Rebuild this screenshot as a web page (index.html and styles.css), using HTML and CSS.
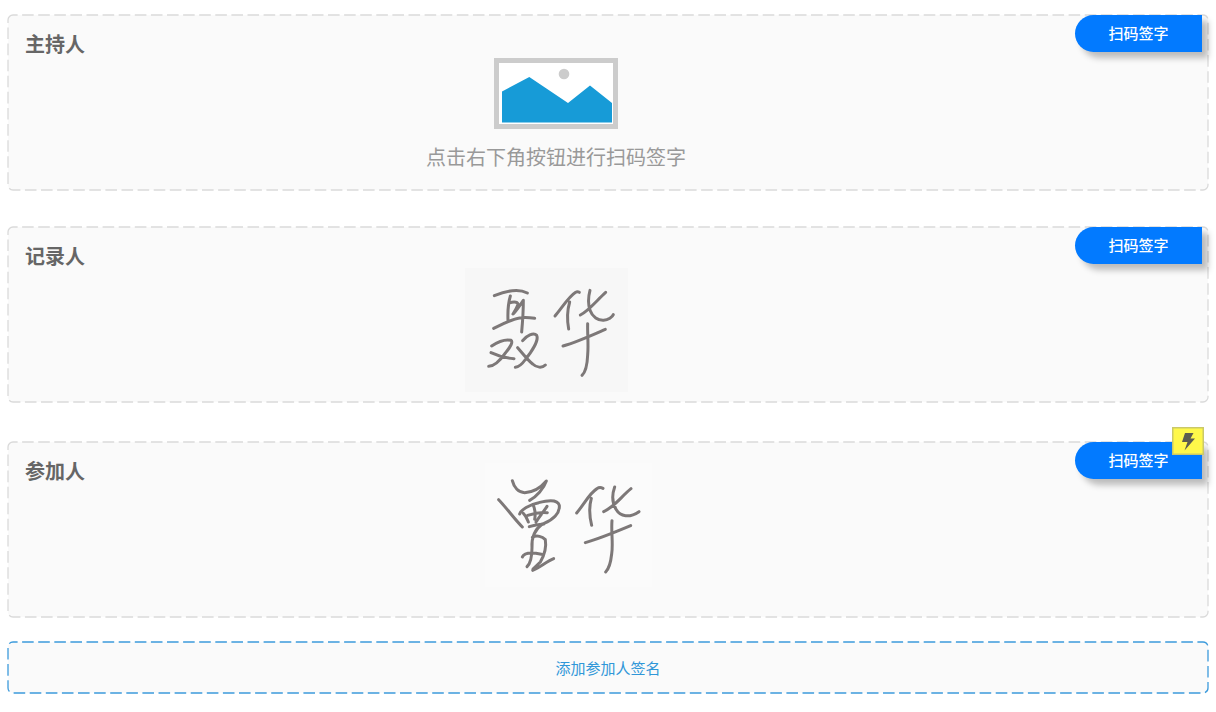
FILE: index.html
```html
<!DOCTYPE html>
<html lang="zh-CN">
<head>
<meta charset="utf-8">
<title>签名</title>
<link rel="stylesheet" href="styles.css">
</head>
<body>
<main class="page">
  <section class="card">
    <svg class="frame" aria-hidden="true"><rect class="frame-line" width="100%" height="100%" rx="5"/></svg>
    <h2 class="title">主持人</h2>
    <div class="empty">
      <svg class="picture" viewBox="0 0 124 71" aria-hidden="true">
        <rect x="2.5" y="2.5" width="119" height="66" fill="#fff" stroke="#ccc" stroke-width="5"/>
        <circle cx="70" cy="16" r="5.3" fill="#ccc"/>
        <path d="M8 33.5L35.300 19L74 45L96 27.500L118 45V64.500H8Z" fill="#179bd7"/>
      </svg>
      <p class="hint">点击右下角按钮进行扫码签字</p>
    </div>
    <button class="scan" type="button">扫码签字</button>
  </section>

  <section class="card">
    <svg class="frame" aria-hidden="true"><rect class="frame-line" width="100%" height="100%" rx="5"/></svg>
    <h2 class="title">记录人</h2>
    <div class="signed signed-recorder">
      <svg class="signature signature-shaded" viewBox="460 260 163 124" role="img" aria-label="签名">
        <g transform="translate(-5 -8) translate(460 260) scale(.33333)">
          <path d="M103 107C130 96 174 84 202 99M151 108C144 132 143 159 144 181M147 129C163 124 177 125 173 136C169 147 163 155 159 162M161 160C170 151 179 137 190 121C190 147 188 184 185 216M101 205C128 192 154 178 179 174C196 171 211 173 224 175"/>
          <path d="M95 258C113 246 135 237 153 241C160 246 151 261 137 278C123 298 106 319 86 319M93 278C112 287 137 295 162 296M188 242C199 227 221 216 230 226C237 240 216 274 195 300C185 314 175 321 166 322M173 263C187 279 203 300 218 312C230 323 246 325 256 315"/>
          <path d="M285 168C306 143 327 109 347 97Q352 93 358 97M329 126C322 150 321 180 326 207M390 91C384 113 384 132 390 151C397 171 415 182 431 181C445 180 457 171 460 164M437 97C412 119 388 151 361 165M309 258C351 246 397 225 436 208M383 191C382 223 386 252 383 285C382 310 377 336 366 346"/>
        </g>
      </svg>
    </div>
    <button class="scan" type="button">扫码签字</button>
  </section>

  <section class="card card-last">
    <svg class="frame" aria-hidden="true"><rect class="frame-line" width="100%" height="100%" rx="5"/></svg>
    <h2 class="title">参加人</h2>
    <div class="signed signed-attendee">
      <svg class="signature" viewBox="5 8 167 124" role="img" aria-label="签名">
        <g transform="scale(.33333)">
          <path d="M97 77C102 98 116 113 134 113C159 112 183 97 199 78C191 101 169 126 149 136M56 134C81 160 102 191 127 216"/>
          <path d="M119 177C123 164 148 149 176 143C202 136 233 133 238 151C240 175 219 195 192 205M130 175C139 183 142 193 145 201M143 181C161 175 176 171 202 173M159 149C165 162 167 177 164 193M201 154C191 170 177 186 168 201M148 215C163 210 180 208 192 207"/>
          <path d="M187 207C166 222 154 244 156 278C156 303 151 325 141 335M157 247C171 239 187 245 196 254C199 272 197 293 181 321L159 342M127 306C133 293 156 292 184 298M158 346C180 338 197 321 221 311"/>
          <path d="M290 174C312 148 329 114 351 101Q359 95 369 100M334 130C327 155 329 187 335 211M404 96C394 124 398 146 408 163C421 186 449 189 477 170M453 101C424 124 407 153 371 170M316 263C361 250 409 230 452 212M396 197C393 229 400 268 395 297C392 325 386 342 377 351"/>
        </g>
      </svg>
    </div>
    <button class="scan" type="button">扫码签字</button>
    <svg class="flash" viewBox="0 0 32 28" aria-hidden="true">
      <rect x=".75" y=".75" width="30.500" height="26.500" fill="#fff84a" stroke="#cbc968" stroke-width="1.500"/>
      <path d="M13 6H21.500L18.500 11.500H23L12.500 23.500L15.500 15H10Z" fill="#5c5c50"/>
    </svg>
  </section>

  <button class="add" type="button">
    <svg class="frame" aria-hidden="true"><rect class="frame-line frame-line-blue" width="100%" height="100%" rx="5"/></svg>
    添加参加人签名
  </button>
</main>
</body>
</html>
```
FILE: styles.css
```css
* {
  box-sizing: border-box;
}

body {
  margin: 0;
  background: #fff;
  font-family: "Noto Sans CJK SC", sans-serif;
}

.page {
  display: flex;
  flex-direction: column;
  gap: 37px;
  padding: 15px 8px;
}

.card {
  position: relative;
  min-height: 175px;
  padding: 15px 17px 0;
  border-radius: 5px;
  background: #fafafa;
}

.card-last {
  margin-top: 3px;
}

.frame {
  position: absolute;
  inset: 0;
  width: 100%;
  height: 100%;
  overflow: visible;
  pointer-events: none;
}

.frame-line {
  fill: none;
  stroke: #dadada;
  stroke-width: 1.3;
  stroke-dasharray: 11.6 4.5;
  stroke-dashoffset: 7;
}

.frame-line-blue {
  stroke: #3d9bdc;
}

.title {
  margin: 0;
  height: 28px;
  font-size: 20px;
  line-height: 28px;
  font-weight: 700;
  color: #666;
}

.empty {
  display: flex;
  flex-direction: column;
  align-items: center;
  gap: 14px;
  padding-right: 104px;
}

.picture {
  width: 124px;
  height: 71px;
}

.hint {
  margin: 0;
  font-size: 20px;
  line-height: 28px;
  color: #999;
}

.signed {
  display: flex;
  justify-content: center;
  margin-top: -2px;
}

.signed-recorder {
  padding-right: 123px;
}

.signed-attendee {
  margin-top: -22px;
  padding-right: 79px;
}

.signature {
  height: 124px;
  fill: none;
  stroke: #7d7878;
  stroke-width: 9;
  stroke-linecap: round;
  stroke-linejoin: round;
  background: #fbfbfb;
}

.signature-shaded {
  background: #f7f7f7;
}

.scan {
  position: absolute;
  top: 0;
  right: 6px;
  width: 127px;
  height: 37px;
  padding: 0 0 2px;
  border: 0;
  border-radius: 19px 0 0 19px;
  background: #027aff;
  box-shadow: 6px 6px 6px rgba(0, 0, 0, 0.25);
  font: 500 15px/35px "Noto Sans CJK SC", sans-serif;
  color: #fff;
}

.flash {
  position: absolute;
  top: -15px;
  right: 4px;
  width: 32px;
  height: 28px;
}

.add {
  position: relative;
  height: 51px;
  margin-top: -12px;
  padding: 0;
  border: 0;
  border-radius: 5px;
  background: #fafafa;
  font: 400 15px/51px "Noto Sans CJK SC", sans-serif;
  color: #3097d8;
}
```
